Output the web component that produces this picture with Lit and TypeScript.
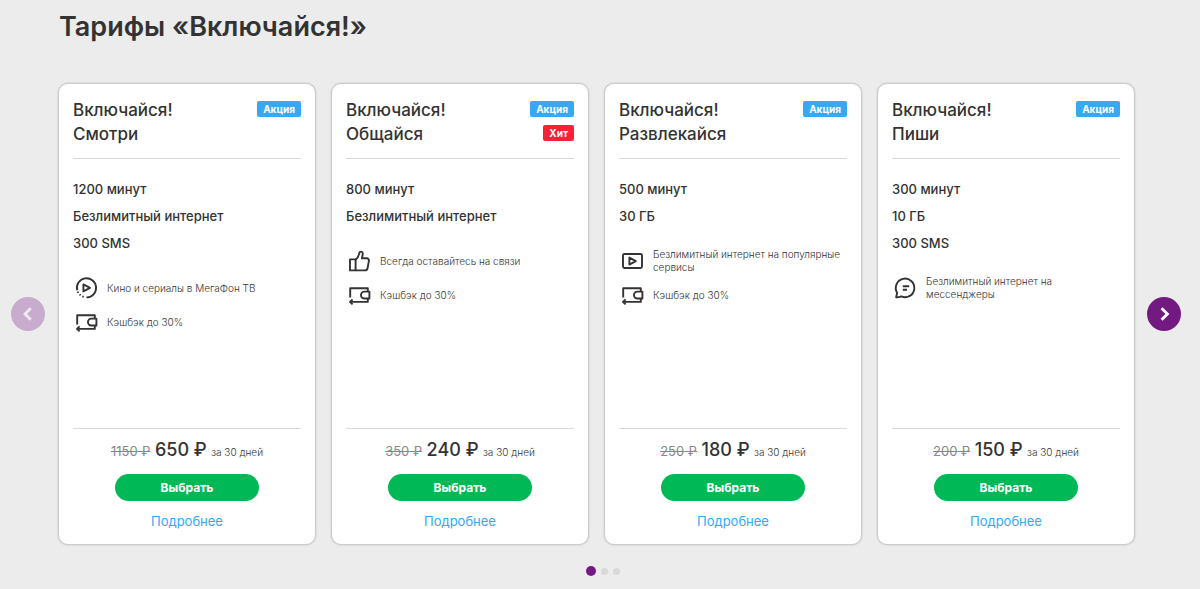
import { LitElement, html, css, svg } from "lit";
import { customElement, property, state } from "lit/decorators.js";
import { classMap } from "lit/directives/class-map.js";

type IconName = "play" | "wallet" | "thumb" | "screen" | "chat";

interface Tariff {
  name: string;
  tags: { text: string; kind: "promo" | "hit" }[];
  specs: string[];
  features: { icon: IconName; text: string }[];
  oldPrice: number;
  price: number;
}

const cashback = { icon: "wallet" as IconName, text: "Кэшбэк до 30%" };
const promo = { text: "Акция", kind: "promo" as const };

const tariffs: Tariff[] = [
  {
    name: "Смотри",
    tags: [promo],
    specs: ["1200 минут", "Безлимитный интернет", "300 SMS"],
    features: [{ icon: "play", text: "Кино и сериалы в МегаФон ТВ" }, cashback],
    oldPrice: 1150,
    price: 650,
  },
  {
    name: "Общайся",
    tags: [promo, { text: "Хит", kind: "hit" }],
    specs: ["800 минут", "Безлимитный интернет"],
    features: [{ icon: "thumb", text: "Всегда оставайтесь на связи" }, cashback],
    oldPrice: 350,
    price: 240,
  },
  {
    name: "Развлекайся",
    tags: [promo],
    specs: ["500 минут", "30 ГБ"],
    features: [{ icon: "screen", text: "Безлимитный интернет на популярные сервисы" }, cashback],
    oldPrice: 250,
    price: 180,
  },
  {
    name: "Пиши",
    tags: [promo],
    specs: ["300 минут", "10 ГБ", "300 SMS"],
    features: [{ icon: "chat", text: "Безлимитный интернет на мессенджеры" }],
    oldPrice: 200,
    price: 150,
  },
];

const icons = {
  play: svg`
    <path d="M4.2 16.2A9.6 9.6 0 1 1 13.5 23.4" />
    <path d="M4.6 17.6l.6 1.2M6.6 20.4l1 .9M9.4 22.4l1.3.5" />
    <path d="M10.4 10.4v7l6.6-3.5z" />`,
  wallet: svg`
    <path d="M4.2 16.5V7.2h17.6v3.3M21.8 17.5v3.4H4" />
    <path d="M23.4 10.6h-5a3.4 3.4 0 0 0 0 6.9h5z" />
    <path d="M6.6 18.4L4 20.9l2.6 2.5" />`,
  thumb: svg`
    <path d="M4 12.4h5.6v11H4z" />
    <path d="M9.6 12.6c2.4-1.600 3.200-4 3.600-6.300.3-2.200 3.600-2.400 3.500.4 0 1.800-.4 3.200-.8 4.600h4.800c1.500 0 2.500 1.100 2.200 2.600l-1.300 7.100c-.3 1.500-1.200 2.400-2.700 2.400H9.600" />`,
  screen: svg`
    <rect x="4" y="7" width="19" height="14" rx="1.500" />
    <path d="M10.400 10.600v7l6.400-3.500z" />`,
  chat: svg`
    <path d="M4.200 23.300l.9-4.600a9.300 9.300 0 1 1 4.200 3.700c-1.600.7-3.200 1-5.100.9z" />
    <path d="M10.800 12.300h6.400M10.800 15.700h4.200" />`,
};

@customElement("tariff-card")
export class TariffCard extends LitElement {
  @property({ attribute: false }) tariff!: Tariff;

  static styles = css`
    :host {
      display: flex;
      flex-direction: column;
      box-sizing: border-box;
      min-width: 0;
      padding: 14px 14px 13px;
      background: #fff;
      border: 1px solid #ccc;
      border-radius: 10px;
      box-shadow: 0 0 2px rgba(0, 0, 0, 0.2);
    }
    .head {
      display: flex;
      justify-content: space-between;
      align-items: flex-start;
      padding-bottom: 12px;
      border-bottom: 1px solid #d8d8d8;
    }
    .name {
      margin: 0;
      font-size: 17px;
      line-height: 24px;
      font-weight: 500;
    }
    .line {
      display: block;
    }
    .tags {
      display: flex;
      flex-direction: column;
      align-items: flex-end;
      gap: 8px;
      padding-top: 3px;
    }
    .tag {
      padding: 0 6px;
      border-radius: 2px;
      font-size: 10px;
      line-height: 16px;
      font-weight: 700;
      color: #fff;
    }
    .promo {
      background: #36a8f4;
    }
    .hit {
      background: #f92135;
    }
    .body {
      flex: 1;
      min-height: 252px;
      padding-top: 17px;
    }
    ul {
      margin: 0;
      padding: 0;
      list-style: none;
    }
    .specs {
      font-size: 13px;
      line-height: 27px;
      font-weight: 500;
    }
    .features {
      margin-top: 14px;
    }
    .feature {
      display: flex;
      align-items: center;
      gap: 6px;
      height: 34px;
      font-size: 10px;
      line-height: 13px;
      font-weight: 300;
    }
    .icon {
      flex: none;
      width: 28px;
      height: 28px;
      fill: none;
      stroke: #333;
      stroke-width: 1.9;
      stroke-linejoin: round;
    }
    .foot {
      display: flex;
      flex-direction: column;
      align-items: center;
      padding-top: 7px;
      border-top: 1px solid #d8d8d8;
    }
    .price {
      margin: 0 0 8px;
      line-height: 28px;
      white-space: nowrap;
    }
    .old {
      font-size: 13px;
      color: #888;
      text-decoration: line-through #e0654f;
    }
    .now {
      font-size: 18px;
      font-weight: 500;
    }
    .period {
      font-size: 10px;
      font-weight: 300;
    }
    .choose {
      width: 144px;
      height: 27px;
      padding: 0;
      border: 0;
      border-radius: 14px;
      background: #00b956;
      color: #fff;
      font: inherit;
      font-size: 12px;
      font-weight: 700;
      cursor: pointer;
    }
    .more {
      margin-top: 10px;
      font-size: 13px;
      line-height: 20px;
      color: #36a8f4;
      text-decoration: none;
    }
  `;

  render() {
    const t = this.tariff;
    return html`
      <header class="head">
        <h3 class="name"><span class="line">Включайся!</span><span class="line">${t.name}</span></h3>
        <div class="tags">
          ${t.tags.map((tag) => html`<span class=${classMap({ tag: true, [tag.kind]: true })}>${tag.text}</span>`)}
        </div>
      </header>
      <div class="body">
        <ul class="specs">
          ${t.specs.map((s) => html`<li>${s}</li>`)}
        </ul>
        <ul class="features">
          ${t.features.map(
            (f) => html`<li class="feature">
              <svg class="icon" viewBox="0 0 28 28" aria-hidden="true">${icons[f.icon]}</svg>
              <span>${f.text}</span>
            </li>`
          )}
        </ul>
      </div>
      <footer class="foot">
        <p class="price">
          <s class="old">${t.oldPrice} ₽</s>
          <span class="now">${t.price} ₽</span>
          <span class="period">за 30 дней</span>
        </p>
        <button class="choose" type="button">Выбрать</button>
        <a class="more" href="#">Подробнее</a>
      </footer>
    `;
  }
}

@customElement("app-root")
export class AppRoot extends LitElement {
  @state() private page = 0;
  private readonly pages = 3;

  static styles = css`
    :host {
      display: block;
      box-sizing: border-box;
      min-height: 100vh;
      padding: 9px 19px 12px 11px;
      background: #ececec;
      color: #333;
      font-family: Inter, "Noto Sans", sans-serif;
    }
    .title {
      margin: 0 0 38px 48px;
      font-size: 27px;
      line-height: 36px;
      font-weight: 600;
    }
    .carousel {
      display: flex;
      align-items: center;
    }
    .cards {
      flex: 1;
      display: grid;
      grid-template-columns: repeat(4, minmax(0, 1fr));
      gap: 15px;
      margin: 0 12px 0 13px;
    }
    .arrow {
      flex: none;
      width: 34px;
      height: 34px;
      padding: 0;
      border: 0;
      border-radius: 50%;
      background: #731982;
      cursor: pointer;
    }
    .arrow:disabled {
      background: #c7acce;
      cursor: default;
    }
    .chevron {
      display: block;
      width: 34px;
      height: 34px;
      fill: none;
      stroke: #fff;
      stroke-width: 2.8;
    }
    .arrow:disabled .chevron {
      stroke: #f0eaf2;
    }
    .dots {
      display: flex;
      justify-content: center;
      align-items: center;
      gap: 5px;
      height: 10px;
      margin-top: 21px;
      padding-left: 14px;
    }
    .dot {
      width: 7px;
      height: 7px;
      padding: 0;
      border: 0;
      border-radius: 50%;
      background: #d9d9d9;
      cursor: pointer;
    }
    .current {
      width: 10px;
      height: 10px;
      background: #731982;
    }
  `;

  render() {
    return html`
      <h2 class="title">Тарифы «Включайся!»</h2>
      <div class="carousel">
        <button class="arrow" type="button" aria-label="Назад" ?disabled=${this.page === 0} @click=${() => this.page--}>
          <svg class="chevron" viewBox="0 0 34 34" aria-hidden="true"><path d="M19.800 11.200L14 17l5.800 5.800" /></svg>
        </button>
        <div class="cards">${tariffs.map((t) => html`<tariff-card .tariff=${t}></tariff-card>`)}</div>
        <button
          class="arrow"
          type="button"
          aria-label="Вперёд"
          ?disabled=${this.page === this.pages - 1}
          @click=${() => this.page++}
        >
          <svg class="chevron" viewBox="0 0 34 34" aria-hidden="true"><path d="M14.600 11.200l5.800 5.800-5.800 5.800" /></svg>
        </button>
      </div>
      <nav class="dots" aria-label="Страницы">
        ${Array.from(
          { length: this.pages },
          (_, i) => html`<button
            class=${classMap({ dot: true, current: i === this.page })}
            type="button"
            aria-label=${`Страница ${i + 1}`}
            @click=${() => (this.page = i)}
          ></button>`
        )}
      </nav>
    `;
  }
}
